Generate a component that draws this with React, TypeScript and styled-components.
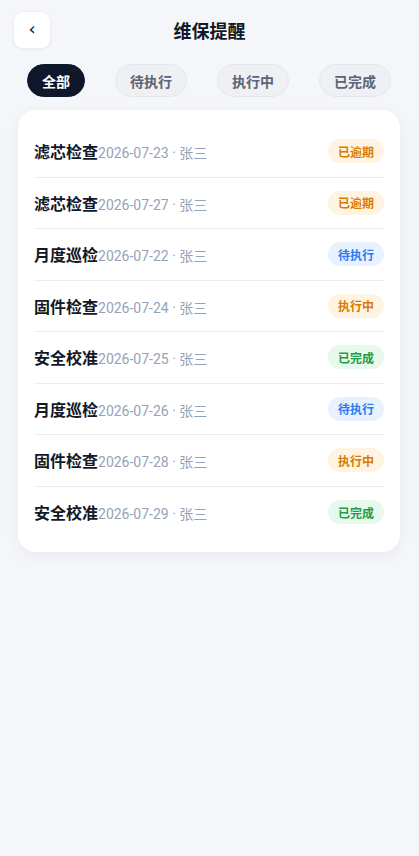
import React, {FC, useState} from 'react';
import styled, {createGlobalStyle} from 'styled-components';

type Status = 'overdue' | 'pending' | 'running' | 'done';

interface IReminder {
    id: number;
    title: string;
    date: string;
    owner: string;
    status: Status;
}

const reminders: IReminder[] = [
    {id: 1, title: '滤芯检查', date: '2026-07-23', owner: '张三', status: 'overdue'},
    {id: 2, title: '滤芯检查', date: '2026-07-27', owner: '张三', status: 'overdue'},
    {id: 3, title: '月度巡检', date: '2026-07-22', owner: '张三', status: 'pending'},
    {id: 4, title: '固件检查', date: '2026-07-24', owner: '张三', status: 'running'},
    {id: 5, title: '安全校准', date: '2026-07-25', owner: '张三', status: 'done'},
    {id: 6, title: '月度巡检', date: '2026-07-26', owner: '张三', status: 'pending'},
    {id: 7, title: '固件检查', date: '2026-07-28', owner: '张三', status: 'running'},
    {id: 8, title: '安全校准', date: '2026-07-29', owner: '张三', status: 'done'},
];

const statusStyles: Record<Status, {label: string; bg: string; fg: string}> = {
    overdue: {label: '已逾期', bg: '#fff4e2', fg: '#d97a06'},
    pending: {label: '待执行', bg: '#e8f2ff', fg: '#2b7cf0'},
    running: {label: '执行中', bg: '#fff4e2', fg: '#d97a06'},
    done: {label: '已完成', bg: '#e7f8ed', fg: '#1f9d4a'},
};

const tabs = ['全部', '待执行', '执行中', '已完成'];

const GlobalStyle = createGlobalStyle`
    html, body {
        margin: 0;
        background: #f5f6fa;
    }
    body {
        font-family: Inter, "Noto Sans CJK SC", sans-serif;
        color: #111827;
    }
    * {
        box-sizing: border-box;
    }
`;

/** Экран списка напоминаний о техобслуживании */
const App: FC = () => {
    const [active, setActive] = useState(0);

    return (
        <Page>
            <GlobalStyle />
            <Header>
                <BackButton aria-label="返回">‹</BackButton>
                <Title>维保提醒</Title>
                <HeaderSpacer />
            </Header>

            <Tabs>
                {tabs.map((tab, i) => (
                    <Tab key={tab} $active={i === active} onClick={() => setActive(i)}>
                        {tab}
                    </Tab>
                ))}
            </Tabs>

            <Card>
                {reminders.map((item) => {
                    const s = statusStyles[item.status];
                    return (
                        <Row key={item.id}>
                            <RowInfo>
                                <RowTitle>{item.title}</RowTitle>
                                <RowMeta>
                                    {item.date} · {item.owner}
                                </RowMeta>
                            </RowInfo>
                            <Badge $bg={s.bg} $fg={s.fg}>
                                {s.label}
                            </Badge>
                        </Row>
                    );
                })}
            </Card>
        </Page>
    );
};

export default App;

const Page = styled.div`
    min-height: 856px;
    background: #f5f6fa;
    padding: 11px 0 0;
`;

const Header = styled.div`
    display: flex;
    align-items: center;
    justify-content: space-between;
    padding: 0 13px;
`;

const BackButton = styled.button`
    width: 38px;
    height: 38px;
    border-radius: 10px;
    border: 1px solid #eceef3;
    background: #fff;
    box-shadow: 0 1px 3px rgba(15, 23, 42, 0.05);
    font-family: "DejaVu Sans", sans-serif;
    font-size: 18px;
    line-height: 1;
    color: #0f172a;
    padding: 0 0 3px;
    cursor: pointer;
`;

const Title = styled.h1`
    margin: 0;
    font-size: 18px;
    font-weight: 700;
    color: #111827;
`;

const HeaderSpacer = styled.div`
    width: 38px;
`;

const Tabs = styled.div`
    display: flex;
    justify-content: space-between;
    padding: 0 28px 0 27px;
    margin-top: 15px;
`;

const Tab = styled.button<{$active: boolean}>`
    height: 33px;
    padding: 0 14px;
    border-radius: 17px;
    border: 1px solid ${({$active}) => ($active ? '#0f172a' : '#e4e7ed')};
    background: ${({$active}) => ($active ? '#0f172a' : '#eef0f4')};
    color: ${({$active}) => ($active ? '#fff' : '#5b6577')};
    font-family: inherit;
    font-size: 14px;
    font-weight: 700;
    cursor: pointer;
`;

const Card = styled.div`
    margin: 13px 19px 0 18px;
    background: #fff;
    border-radius: 18px;
    padding: 16px 16px 14px;
    box-shadow: 0 4px 16px rgba(15, 23, 42, 0.05);
`;

const Row = styled.div`
    display: flex;
    align-items: center;
    justify-content: space-between;
    height: 51.5px;
    border-bottom: 1px solid #eceef3;

    &:last-child {
        border-bottom: none;
    }
`;

const RowInfo = styled.div`
    display: flex;
    align-items: baseline;
`;

const RowTitle = styled.span`
    font-size: 16px;
    font-weight: 700;
    color: #111827;
`;

const RowMeta = styled.span`
    font-family: Roboto, "Noto Sans CJK SC", sans-serif;
    font-size: 14px;
    color: #94a3b8;
`;

const Badge = styled.span<{$bg: string; $fg: string}>`
    display: inline-flex;
    align-items: center;
    height: 24px;
    padding: 0 10px;
    border-radius: 12px;
    background: ${({$bg}) => $bg};
    color: ${({$fg}) => $fg};
    font-size: 12px;
    font-weight: 700;
`;
